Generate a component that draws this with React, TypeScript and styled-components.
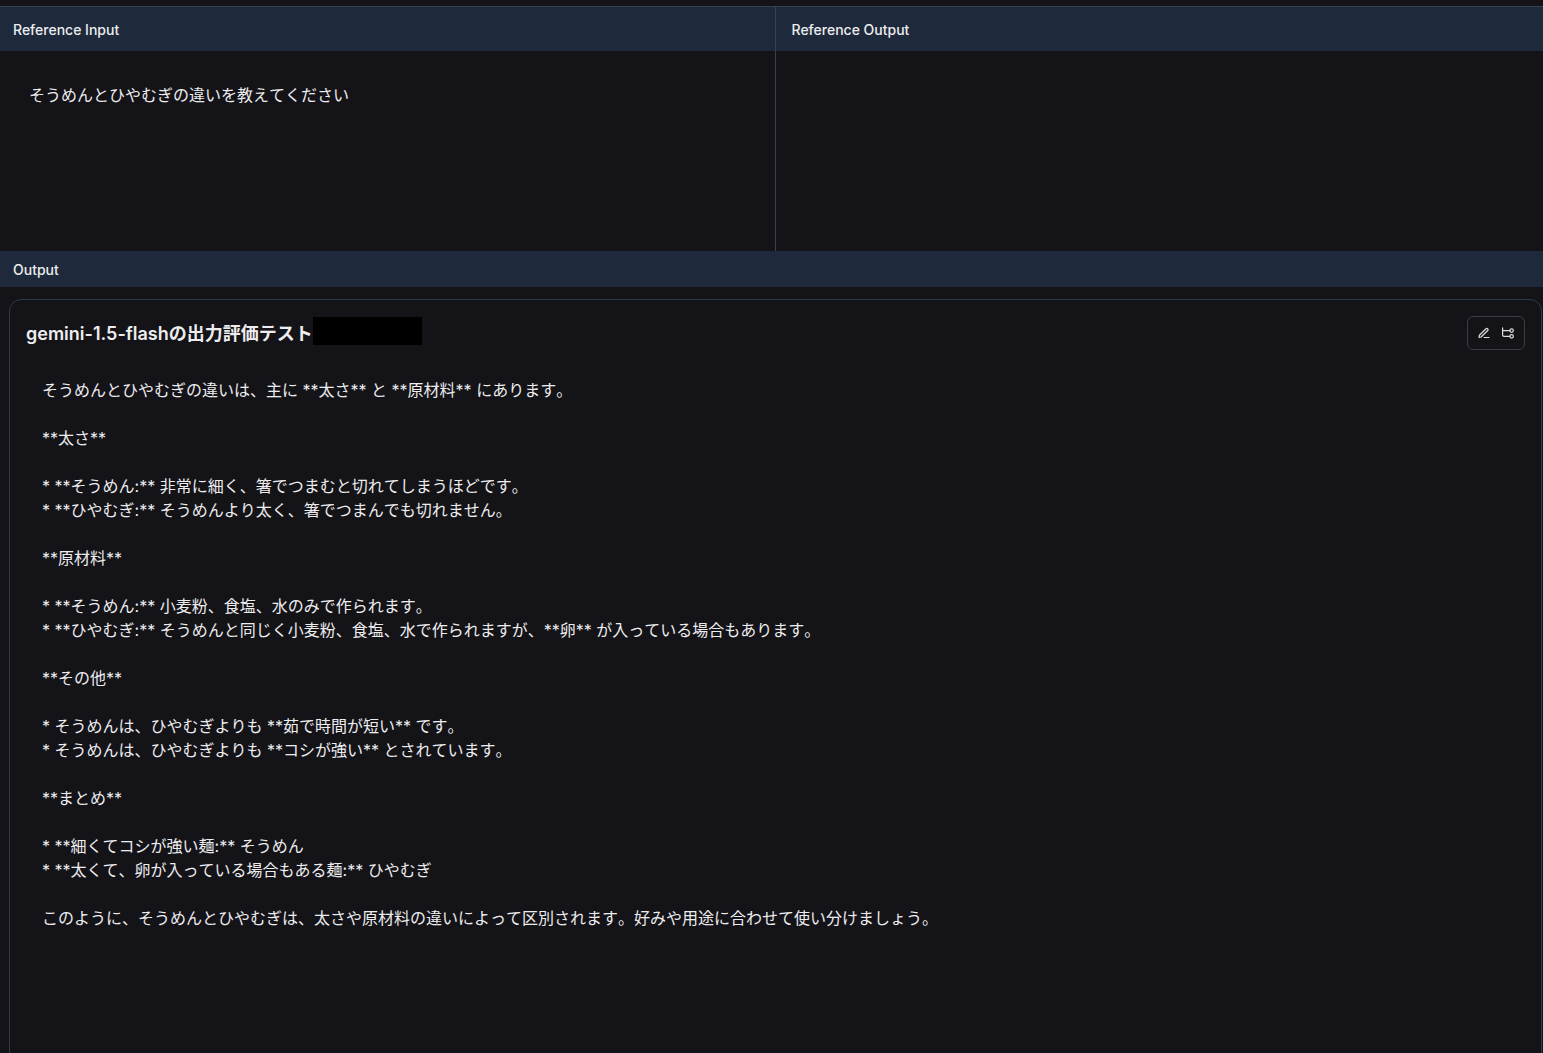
import React from "react";
import styled, { createGlobalStyle } from "styled-components";

const GlobalStyle = createGlobalStyle`
  * { box-sizing: border-box; }
  body {
    margin: 0;
    overflow: hidden;
    background: #141318;
    color: #ededef;
    font-family: Inter, "Noto Sans CJK JP", sans-serif;
  }
`;

const Page = styled.main`
  display: flex;
  flex-direction: column;
  height: 100vh;
  padding-top: 6px;
  overflow: hidden;
`;

const ReferenceGrid = styled.section`
  display: grid;
  grid-template-columns: 775px 1fr;
  flex: none;
  height: 245px;
  border-top: 1px solid #334155;
`;

const ReferenceColumn = styled.div<{ $divided?: boolean }>`
  display: flex;
  flex-direction: column;
  border-left: ${(p) => (p.$divided ? "1px solid #334155" : "none")};
`;

const SectionHeader = styled.header<{ $height: number; $inset: number }>`
  display: flex;
  align-items: center;
  flex: none;
  height: ${(p) => p.$height}px;
  padding: 2px 0 0 ${(p) => p.$inset}px;
  background: #1e293b;
  font-size: 14px;
  font-weight: 500;
  line-height: 20px;
`;

const TextBlock = styled.div`
  font-size: 16px;
  line-height: 24px;
  font-kerning: none;
  white-space: pre-wrap;
`;

const InputText = styled(TextBlock)`
  padding: 32px 29px;
`;

const OutputText = styled(TextBlock)`
  padding: 28px 16px;
`;

const Card = styled.article`
  flex: none;
  height: 900px;
  margin: 12px 1px 0 9px;
  padding: 16px;
  border: 1px solid #2c3b4e;
  border-radius: 12px;
`;

const CardHeader = styled.div`
  display: flex;
  align-items: flex-start;
  height: 34px;
`;

const Title = styled.h2`
  margin: 4px 0 0;
  font-size: 18px;
  font-weight: 600;
  line-height: 28px;
  white-space: nowrap;
`;

const Redaction = styled.span`
  width: 109px;
  height: 28px;
  margin-top: 1px;
  background: #000;
`;

const Actions = styled.div`
  display: flex;
  align-items: center;
  justify-content: center;
  gap: 10px;
  width: 58px;
  height: 34px;
  margin-left: auto;
  border: 1px solid #3b3b42;
  border-radius: 6px;
`;

const IconButton = styled.button`
  display: flex;
  padding: 0;
  border: 0;
  background: none;
  color: #dcdce0;
`;

const Icon = styled.svg`
  width: 14px;
  height: 14px;
  fill: none;
  stroke: currentColor;
  stroke-width: 1.2;
  stroke-linecap: round;
  stroke-linejoin: round;
`;

const EditIcon = () => (
  <Icon viewBox="0 0 14 14">
    <path d="M7.2 11.5H12" />
    <path d="M2 11.4L2.4 9.3L9 2.8C9.5 2.3 10.2 2.3 10.7 2.8C11.2 3.3 11.2 4 10.7 4.5L4.1 11Z" />
  </Icon>
);

const TreeIcon = () => (
  <Icon viewBox="0 0 14 14">
    <path d="M1.6 1.8V8.9Q1.6 10.3 3 10.3H8.8M1.6 4.6H8.8" />
    <circle cx="10.6" cy="4.6" r="1.75" />
    <circle cx="10.6" cy="10.3" r="1.75" />
  </Icon>
);

const answer = `そうめんとひやむぎの違いは、主に **太さ** と **原材料** にあります。

**太さ**

* **そうめん:** 非常に細く、箸でつまむと切れてしまうほどです。
* **ひやむぎ:** そうめんより太く、箸でつまんでも切れません。

**原材料**

* **そうめん:** 小麦粉、食塩、水のみで作られます。
* **ひやむぎ:** そうめんと同じく小麦粉、食塩、水で作られますが、**卵** が入っている場合もあります。

**その他**

* そうめんは、ひやむぎよりも **茹で時間が短い** です。
* そうめんは、ひやむぎよりも **コシが強い** とされています。

**まとめ**

* **細くてコシが強い麺:** そうめん
* **太くて、卵が入っている場合もある麺:** ひやむぎ

このように、そうめんとひやむぎは、太さや原材料の違いによって区別されます。好みや用途に合わせて使い分けましょう。`;

export default function App() {
  return (
    <>
      <GlobalStyle />
      <Page lang="ja">
        <ReferenceGrid>
          <ReferenceColumn>
            <SectionHeader $height={44} $inset={13}>Reference Input</SectionHeader>
            <InputText>そうめんとひやむぎの違いを教えてください</InputText>
          </ReferenceColumn>
          <ReferenceColumn $divided>
            <SectionHeader $height={44} $inset={15.5}>Reference Output</SectionHeader>
          </ReferenceColumn>
        </ReferenceGrid>
        <SectionHeader $height={36} $inset={13}>Output</SectionHeader>
        <Card>
          <CardHeader>
            <Title>gemini-1.5-flashの出力評価テスト</Title>
            <Redaction />
            <Actions>
              <IconButton aria-label="Edit"><EditIcon /></IconButton>
              <IconButton aria-label="Trace"><TreeIcon /></IconButton>
            </Actions>
          </CardHeader>
          <OutputText>{answer}</OutputText>
        </Card>
      </Page>
    </>
  );
}
